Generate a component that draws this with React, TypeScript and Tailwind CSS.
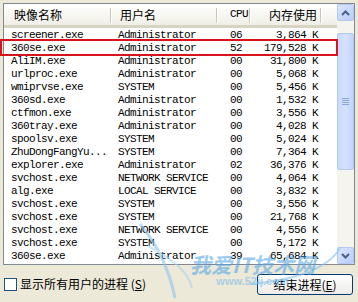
import React from 'react'

type Proc = { name: string; user: string; cpu: string; mem: string }

const procs: Proc[] = [
  { name: 'screener.exe', user: 'Administrator', cpu: '06', mem: '3,864 K' },
  { name: '360se.exe', user: 'Administrator', cpu: '52', mem: '179,528 K' },
  { name: 'AliIM.exe', user: 'Administrator', cpu: '00', mem: '31,800 K' },
  { name: 'urlproc.exe', user: 'Administrator', cpu: '00', mem: '5,068 K' },
  { name: 'wmiprvse.exe', user: 'SYSTEM', cpu: '00', mem: '5,456 K' },
  { name: '360sd.exe', user: 'Administrator', cpu: '00', mem: '1,532 K' },
  { name: 'ctfmon.exe', user: 'Administrator', cpu: '00', mem: '3,556 K' },
  { name: '360tray.exe', user: 'Administrator', cpu: '00', mem: '4,028 K' },
  { name: 'spoolsv.exe', user: 'SYSTEM', cpu: '00', mem: '5,024 K' },
  { name: 'ZhuDongFangYu...', user: 'SYSTEM', cpu: '00', mem: '7,364 K' },
  { name: 'explorer.exe', user: 'Administrator', cpu: '02', mem: '36,376 K' },
  { name: 'svchost.exe', user: 'NETWORK SERVICE', cpu: '00', mem: '4,064 K' },
  { name: 'alg.exe', user: 'LOCAL SERVICE', cpu: '00', mem: '3,832 K' },
  { name: 'svchost.exe', user: 'SYSTEM', cpu: '00', mem: '3,556 K' },
  { name: 'svchost.exe', user: 'SYSTEM', cpu: '00', mem: '21,768 K' },
  { name: 'svchost.exe', user: 'NETWORK SERVICE', cpu: '00', mem: '4,556 K' },
  { name: 'svchost.exe', user: 'SYSTEM', cpu: '00', mem: '5,172 K' },
  { name: '360se.exe', user: 'Administrator', cpu: '39', mem: '65,684 K' },
  { name: 'lsass.exe', user: 'SYSTEM', cpu: '00', mem: '1,240 K' },
]

const mono = "font-['Liberation_Mono','Noto_Sans_CJK_SC',monospace] text-[11px] tracking-[-0.6px] text-black"
const cjk = "font-['Noto_Sans_CJK_SC','Liberation_Sans',sans-serif] text-[12px] text-black"

function HeaderCell({ w, pad, children }: { w: string; pad: string; children: React.ReactNode }) {
  return (
    <div className={`${w} ${pad} relative flex h-full items-center whitespace-nowrap`}>
      {children}
      <span className="absolute right-0 top-[4px] h-[15px] w-[2px] border-l border-r border-l-[#cbc7b8] border-r-white" />
    </div>
  )
}

function ScrollButton({ up }: { up?: boolean }) {
  return (
    <div className="flex h-[17px] w-[17px] items-center justify-center rounded-[2px] border border-[#b4c8f6] bg-gradient-to-br from-[#dae6fe] to-[#b9cdfa]">
      <svg width="9" height="6" viewBox="0 0 9 6">
        <path d={up ? 'M1 5 L4.5 1.5 L8 5' : 'M1 1 L4.5 4.5 L8 1'} fill="none" stroke="#4d6185" strokeWidth="2" />
      </svg>
    </div>
  )
}

export default function App() {
  return (
    <div className="relative h-[302px] w-[358px] overflow-hidden bg-[#ece9d8] pl-[3px] pt-[3px]">
      <div className="flex h-[262px] w-[352px] border border-[#828790] bg-white">
        <div className="flex min-w-0 flex-1 flex-col">
          {/* column header */}
          <div className="flex h-[24px] shrink-0 border-b-[3px] border-b-[#d8d4c4] bg-gradient-to-b from-white to-[#f0efe6]">
            <HeaderCell w="w-[108px]" pad="pl-[10px]"><span className={cjk}>映像名称</span></HeaderCell>
            <HeaderCell w="w-[106px]" pad="pl-[8px]"><span className={cjk}>用户名</span></HeaderCell>
            <HeaderCell w="w-[33px]" pad="pl-[12px]"><span className={mono}>CPU</span></HeaderCell>
            <HeaderCell w="w-[71px]" pad="justify-end pr-[5px]"><span className={cjk}>内存使用</span></HeaderCell>
            <div className="flex-1" />
          </div>
          {/* rows */}
          <div className="flex-1 overflow-hidden pt-[1px]">
            {procs.map((p, i) => (
              <div key={i} className="flex h-[13px] items-center leading-[13px]">
                <div className={`${mono} w-[108px] whitespace-nowrap pl-[7px]`}>{p.name}</div>
                <div className={`${mono} w-[106px] whitespace-nowrap pl-[6px]`}>{p.user}</div>
                <div className={`${mono} w-[33px] pl-[12px]`}>{p.cpu}</div>
                <div className={`${mono} w-[71px] whitespace-nowrap pr-[4px] text-right`}>{p.mem}</div>
              </div>
            ))}
          </div>
        </div>
        {/* scrollbar */}
        <div className="flex w-[17px] shrink-0 flex-col bg-[#f5f4ee]">
          <ScrollButton up />
          <div className="relative flex-1">
            <div className="absolute left-0 top-[12px] flex h-[137px] w-[17px] items-center justify-center rounded-[2px] border border-[#b4c8f6] bg-gradient-to-r from-[#c9d8fc] via-[#d6e2fe] to-[#c2d3fb]">
              <div className="flex flex-col gap-[1px]">
                <span className="block h-[1px] w-[7px] bg-[#8aa3d8]" />
                <span className="block h-[1px] w-[7px] bg-[#8aa3d8]" />
                <span className="block h-[1px] w-[7px] bg-[#8aa3d8]" />
                <span className="block h-[1px] w-[7px] bg-[#8aa3d8]" />
              </div>
            </div>
          </div>
          <ScrollButton />
        </div>
      </div>

      {/* bottom controls */}
      <div className="mt-[8px] flex items-center justify-between pr-[5px]">
        <label className="flex items-center gap-[3px] pl-[1px]">
          <span className="block h-[13px] w-[13px] border border-[#1c5180] bg-white" />
          <span className={cjk}>
            显示所有用户的进程 (<span className="underline">S</span>)
          </span>
        </label>
        <button className={`${cjk} mt-[1px] flex h-[21px] w-[96px] items-center justify-center rounded-[3px] border border-[#003c74] bg-gradient-to-b from-white to-[#ecebe6]`}>
          结束进程(<span className="underline">E</span>)
        </button>
      </div>

      {/* red highlight box */}
      <div className="pointer-events-none absolute left-0 top-[39px] h-[17px] w-[338px] border-2 border-[#d9131b]" />

      {/* watermark */}
      <div className="pointer-events-none absolute left-[130px] top-[218px] opacity-60">
        <svg width="230" height="84" viewBox="0 0 230 84">
          <path d="M10 6 C30 30, 40 55, 45 80" fill="none" stroke="#8cc6ee" strokeWidth="3" />
          <path d="M18 28 C40 40, 58 52, 62 70" fill="none" stroke="#a9d6f2" strokeWidth="2" />
          <path d="M210 30 C200 48, 170 62, 120 66" fill="none" stroke="#8cc6ee" strokeWidth="2" />
        </svg>
      </div>
      <div className="pointer-events-none absolute left-[190px] top-[253px] flex flex-col items-center opacity-60">
        <span className="font-['Noto_Sans_CJK_SC',sans-serif] text-[21px] font-bold italic leading-[22px] text-[#5aa8e6]">我爱IT技术网</span>
        <span className="font-['Liberation_Sans',sans-serif] text-[11px] font-bold leading-[12px] text-[#7dbbe9]">www.52ij.com</span>
      </div>
    </div>
  )
}
